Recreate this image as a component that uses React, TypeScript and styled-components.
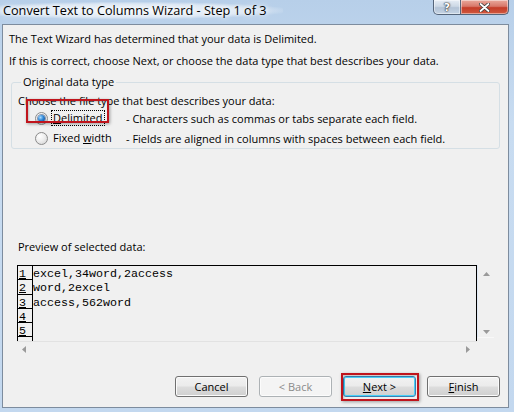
import styled, { createGlobalStyle } from "styled-components";

const GlobalStyle = createGlobalStyle`
  html, body {
    margin: 0;
    padding: 0;
    background: #c3d8ef;
  }
  body {
    font-family: "Open Sans", "Noto Sans", sans-serif;
    font-size: 11px;
    color: #000;
  }
`;

const Window = styled.div`
  width: 514px;
  height: 412px;
  display: flex;
  flex-direction: column;
  overflow: hidden;
  background: linear-gradient(180deg, #b7cfe9 0%, #c8dcf1 30%, #c3d8ef 100%);
`;

const TitleBar = styled.div`
  height: 24px;
  flex-shrink: 0;
  display: flex;
  justify-content: space-between;
  align-items: flex-start;
`;

const Title = styled.div`
  margin-top: 2px;
  padding: 0 16px 0 3px;
  font-size: 12.7px;
  line-height: 17px;
  color: #000;
  background: radial-gradient(ellipse at 45% 50%, rgba(255, 255, 255, 0.85) 0%, rgba(255, 255, 255, 0.5) 55%, rgba(255, 255, 255, 0) 75%);
  text-shadow: 0 0 5px #fff, 0 0 8px #fff;
`;

const CaptionButtons = styled.div`
  display: flex;
  margin-right: 5px;
`;

const CaptionButton = styled.div<{ $kind: "help" | "close" }>`
  width: ${(p) => (p.$kind === "close" ? 48 : 28)}px;
  height: 15px;
  box-sizing: border-box;
  display: flex;
  align-items: center;
  justify-content: center;
  border: 1px solid #55657a;
  border-top: none;
  border-left-width: ${(p) => (p.$kind === "close" ? 0 : 1)}px;
  border-radius: ${(p) => (p.$kind === "close" ? "0 0 5px 0" : "0 0 0 5px")};
  background: ${(p) =>
    p.$kind === "close"
      ? "linear-gradient(180deg, #e9a99c 0%, #d8786a 45%, #c43c28 55%, #d0593f 100%)"
      : "linear-gradient(180deg, #e6edf5 0%, #ccd8e5 45%, #b3c3d6 55%, #c5d4e4 100%)"};
  box-shadow: inset 0 0 0 1px rgba(255, 255, 255, 0.45);
  color: #fff;
  font-family: "DejaVu Sans", sans-serif;
  font-weight: bold;
  font-size: 11px;
  line-height: 13px;
  text-shadow: 0 0 1px #333, 0 0 1px #333, 0 0 2px #333;
`;

const Client = styled.div`
  margin: 0 5px 0 2px;
  height: 384px;
  box-sizing: border-box;
  border: 1px solid #7d8c9e;
  background: #f0f0f0;
  display: flex;
  flex-direction: column;
`;

const Intro = styled.div`
  padding: 4px 0 0 6px;
`;

const Line = styled.p`
  margin: 0;
  line-height: 20px;
  & + & {
    margin-top: 2px;
  }
`;

const Group = styled.fieldset`
  margin: 3px 8px 0 8px;
  padding: 4px 0 0 6px;
  border: 1px solid #d5dfe5;
  border-radius: 3px;
  min-width: 0;
`;

const Legend = styled.legend`
  margin-left: 3px;
  padding: 0 2px;
  line-height: 16px;
  color: #000;
`;

const Prompt = styled.div`
  line-height: 14px;
`;

const OptionRow = styled.div<{ $marked?: boolean }>`
  position: relative;
  height: 20px;
  padding-left: 17px;
  display: grid;
  grid-template-columns: 13px 68px auto;
  column-gap: 5px;
  align-items: center;

  &::before {
    content: "";
    display: ${(p) => (p.$marked ? "block" : "none")};
    position: absolute;
    left: 8px;
    top: -9px;
    width: 83px;
    height: 24px;
    box-sizing: border-box;
    border: 2px solid #c0141c;
    box-shadow: 1px 1px 3px rgba(0, 0, 0, 0.35), inset 1px 1px 2px rgba(0, 0, 0, 0.2);
    pointer-events: none;
  }
`;

const Radio = styled.span<{ $checked?: boolean }>`
  width: 13px;
  height: 13px;
  box-sizing: border-box;
  border-radius: 50%;
  border: 1px solid #8b8b8b;
  background: radial-gradient(circle at 35% 30%, #ffffff 0%, #eeeeee 45%, #cfcfcf 100%);
  display: flex;
  align-items: center;
  justify-content: center;

  &::after {
    content: "";
    width: 7px;
    height: 7px;
    border-radius: 50%;
    display: ${(p) => (p.$checked ? "block" : "none")};
    background: radial-gradient(circle at 35% 35%, #a8dcff 0%, #2f86d6 45%, #0b3d7e 100%);
    box-shadow: 0 0 0 1px rgba(30, 60, 110, 0.5);
  }
`;

const OptionLabel = styled.span<{ $focused?: boolean }>`
  justify-self: start;
  line-height: 14px;
  margin-left: -1px;
  padding: 0 1px;
  outline: ${(p) => (p.$focused ? "1px dotted #000" : "none")};
`;

const Hint = styled.span`
  white-space: nowrap;
`;

const Key = styled.span`
  text-decoration: underline;
`;

const PreviewLabel = styled.div`
  margin: 90px 0 0 15px;
  line-height: 16px;
`;

const Preview = styled.div`
  margin: 10px 0 0 14px;
  width: 477px;
  display: grid;
  grid-template-columns: 460px 17px;
  grid-template-rows: 76px 16px;
`;

const DataArea = styled.div`
  box-sizing: border-box;
  border-top: 1px solid #000;
  border-right: 1px solid #000;
  overflow: hidden;
  font-family: "Liberation Mono", monospace;
  font-size: 11.67px;
`;

const DataRow = styled.div`
  display: flex;
  height: 14.25px;
`;

const RowNumber = styled.div`
  width: 16px;
  flex-shrink: 0;
  box-sizing: border-box;
  border-left: 1px solid #000;
  border-right: 1px solid #000;
  border-bottom: 1px solid #000;
  padding: 2px 0 0 1px;
  line-height: 12px;
`;

const RowText = styled.div`
  padding-top: 2px;
  line-height: 12px;
  white-space: pre;
`;

const VScroll = styled.div`
  box-sizing: border-box;
  border-left: 1px solid #dfe9f5;
  border-bottom: 1px solid #f8f8f8;
  margin-bottom: 3px;
  display: flex;
  flex-direction: column;
  justify-content: space-between;
  align-items: center;
  padding: 7px 0 3px;
`;

const HScroll = styled.div`
  box-sizing: border-box;
  border-top: 1px solid #e2e2e2;
  display: flex;
  justify-content: space-between;
  align-items: center;
  padding: 0 7px 0 5px;
`;

const Arrow = styled.svg`
  display: block;
  fill: #9a9a9a;
`;

const ButtonRow = styled.div`
  margin-top: 19px;
  padding-right: 8px;
  display: flex;
  justify-content: flex-end;
  gap: 11px;
`;

const Button = styled.button<{ $default?: boolean; $marked?: boolean }>`
  position: relative;
  width: 73px;
  height: 21px;
  padding: 0;
  box-sizing: border-box;
  border-radius: 3px;
  border: 1px solid ${(p) => (p.$default ? "#3c7fb1" : "#707070")};
  background: linear-gradient(180deg, #f2f2f2 0%, #ebebeb 48%, #dddddd 52%, #cfcfcf 100%);
  box-shadow: inset 0 0 0 1px ${(p) => (p.$default ? "#48d0f8" : "#fbfbfb")};
  font-family: inherit;
  font-size: 11px;
  line-height: 18px;
  color: #000;

  &:disabled {
    border-color: #adb2b5;
    background: #f4f4f4;
    box-shadow: inset 0 0 0 1px #fcfcfc;
    color: #8a8a8a;
  }

  &::after {
    content: "";
    display: ${(p) => (p.$marked ? "block" : "none")};
    position: absolute;
    left: -3px;
    top: -4px;
    right: -4px;
    bottom: -5px;
    border: 2px solid #c0141c;
    box-shadow: 1px 1px 3px rgba(0, 0, 0, 0.35), inset 1px 1px 2px rgba(0, 0, 0, 0.2);
    pointer-events: none;
  }
`;

// the sixth row is only peeking out under the fifth, so it shows no number
const rows = ["excel,34word,2access", "word,2excel", "access,562word", "", "", ""];

export default function App() {
  return (
    <>
      <GlobalStyle />
      <Window>
        <TitleBar>
          <Title>Convert Text to Columns Wizard - Step 1 of 3</Title>
          <CaptionButtons>
            <CaptionButton $kind="help">?</CaptionButton>
            <CaptionButton $kind="close">
              <svg width="11" height="9" viewBox="0 0 11 9">
                <path d="M1.5 1 L9.5 8 M9.5 1 L1.5 8" stroke="#3a3a3a" strokeWidth="3.4" strokeLinecap="round" />
                <path d="M1.5 1 L9.5 8 M9.5 1 L1.5 8" stroke="#fff" strokeWidth="1.8" strokeLinecap="round" />
              </svg>
            </CaptionButton>
          </CaptionButtons>
        </TitleBar>
        <Client>
          <Intro>
            <Line>The Text Wizard has determined that your data is Delimited.</Line>
            <Line>If this is correct, choose Next, or choose the data type that best describes your data.</Line>
          </Intro>
          <Group>
            <Legend>Original data type</Legend>
            <Prompt>Choose the file type that best describes your data:</Prompt>
            <OptionRow $marked>
              <Radio $checked />
              <OptionLabel $focused>
                <Key>D</Key>elimited
              </OptionLabel>
              <Hint>- Characters such as commas or tabs separate each field.</Hint>
            </OptionRow>
            <OptionRow>
              <Radio />
              <OptionLabel>
                Fixed <Key>w</Key>idth
              </OptionLabel>
              <Hint>- Fields are aligned in columns with spaces between each field.</Hint>
            </OptionRow>
          </Group>
          <PreviewLabel>Preview of selected data:</PreviewLabel>
          <Preview>
            <DataArea>
              {rows.map((text, i) => (
                <DataRow key={i}>
                  <RowNumber>{i < 5 && <Key>{i + 1}</Key>}</RowNumber>
                  <RowText>{text}</RowText>
                </DataRow>
              ))}
            </DataArea>
            <VScroll>
              <Arrow width="7" height="4" viewBox="0 0 7 4">
                <path d="M3.5 0 L7 4 L0 4 Z" />
              </Arrow>
              <Arrow width="7" height="4" viewBox="0 0 7 4">
                <path d="M0 0 L7 0 L3.5 4 Z" />
              </Arrow>
            </VScroll>
            <HScroll>
              <Arrow width="4" height="7" viewBox="0 0 4 7">
                <path d="M0 3.5 L4 0 L4 7 Z" />
              </Arrow>
              <Arrow width="4" height="7" viewBox="0 0 4 7">
                <path d="M4 3.5 L0 0 L0 7 Z" />
              </Arrow>
            </HScroll>
            <div />
          </Preview>
          <ButtonRow>
            <Button>Cancel</Button>
            <Button disabled>&lt; Back</Button>
            <Button $default $marked>
              <Key>N</Key>ext &gt;
            </Button>
            <Button>
              <Key>F</Key>inish
            </Button>
          </ButtonRow>
        </Client>
      </Window>
    </>
  );
}
